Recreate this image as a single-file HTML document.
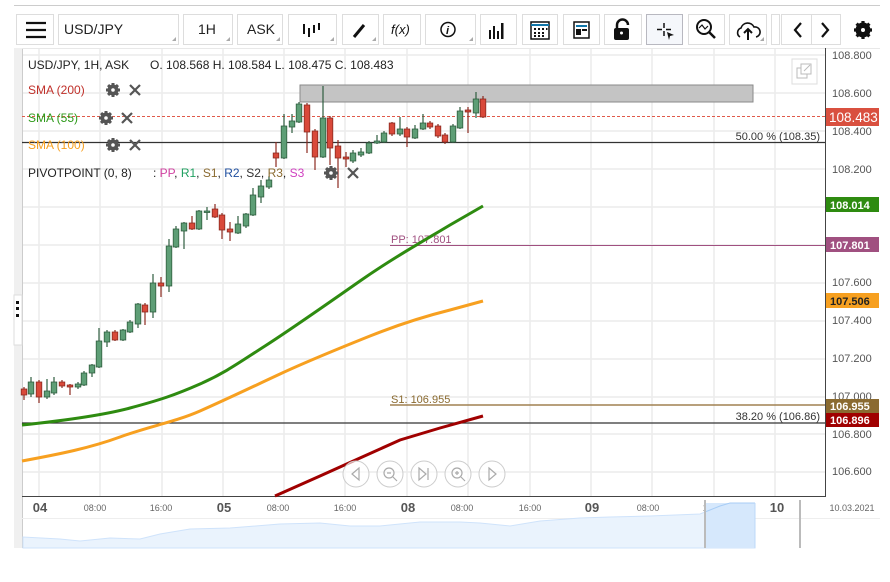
<!DOCTYPE html>
<html><head><meta charset="utf-8"><style>
body{margin:0;width:890px;height:577px;overflow:hidden;background:#fff;font-family:"Liberation Sans",sans-serif}
svg text{font-family:"Liberation Sans",sans-serif}
.pre{white-space:pre}
</style></head><body>
<svg id="s" width="890" height="577" viewBox="0 0 890 577" xmlns="http://www.w3.org/2000/svg">
<rect x="0" y="0" width="890" height="577" fill="#fff"/>
<line x1="14" y1="5.5" x2="880" y2="5.5" stroke="#ccc"/>
<g fill="#fff" stroke="#ddd">
<rect x="16.5" y="14.5" width="37" height="30"/>
<rect x="58.5" y="14.5" width="120" height="30"/>
<rect x="183.5" y="14.5" width="49" height="30"/>
<rect x="237.5" y="14.5" width="45" height="30"/>
<rect x="288.5" y="14.5" width="48" height="30"/>
<rect x="342.5" y="14.5" width="36" height="30"/>
<rect x="383.5" y="14.5" width="37" height="30"/>
<rect x="425.5" y="14.5" width="50" height="30"/>
<rect x="480.5" y="14.5" width="36" height="30"/>
<rect x="522.5" y="14.5" width="35" height="30"/>
<rect x="563.5" y="14.5" width="36" height="30"/>
<rect x="604.5" y="14.5" width="37" height="30"/>
<rect x="646.5" y="14.5" width="36" height="30" fill="#f5f7fb" stroke="#b8b8c0"/>
<rect x="688.5" y="14.5" width="36" height="30"/>
<rect x="729.5" y="14.5" width="37" height="30"/>
<rect x="771.5" y="14.5" width="8" height="30"/>
<rect x="781.5" y="14.5" width="59" height="30"/>
</g>
<line x1="811.5" y1="15" x2="811.5" y2="44" stroke="#ddd"/>
<g fill="#aaa">
<path d="M176 41 L176 37 L172 41Z"/><path d="M230 41 L230 37 L226 41Z"/><path d="M280 41 L280 37 L276 41Z"/><path d="M334 41 L334 37 L330 41Z"/><path d="M376 41 L376 37 L372 41Z"/><path d="M473 41 L473 37 L469 41Z"/><path d="M764 41 L764 37 L760 41Z"/>
</g>
<g stroke="#111" stroke-width="2.2"><line x1="26" y1="23" x2="46" y2="23"/><line x1="26" y1="30" x2="46" y2="30"/><line x1="26" y1="37" x2="46" y2="37"/></g>
<text x="64" y="34" font-size="14" fill="#222">USD/JPY</text>
<text x="198" y="34" font-size="14" fill="#222">1H</text>
<text x="247" y="34" font-size="14" fill="#222">ASK</text>
<g stroke="#111" stroke-width="2"><line x1="304" y1="24" x2="304" y2="34"/><line x1="309" y1="28" x2="309" y2="37"/><line x1="314" y1="25" x2="314" y2="33"/><line x1="319" y1="23" x2="319" y2="30"/></g>
<path d="M354 37 L364 25" stroke="#111" stroke-width="3"/>
<text x="391" y="34" font-size="13" font-style="italic" font-family="Liberation Serif" fill="#111">f(x)</text>
<circle cx="448" cy="29.5" r="7" fill="none" stroke="#111" stroke-width="1.5"/><text x="446" y="34" font-size="11" font-style="italic" font-weight="bold" font-family="Liberation Serif" fill="#111">i</text>
<g fill="#111"><rect x="489" y="30" width="2" height="9"/><rect x="493" y="26" width="2" height="13"/><rect x="497" y="31" width="2" height="8"/><rect x="501" y="23" width="2.5" height="16"/></g>
<rect x="531" y="22" width="18" height="17" fill="none" stroke="#111" stroke-width="1.5"/><line x1="531" y1="25" x2="549" y2="25" stroke="#17a" stroke-width="2"/>
<g fill="#111"><rect x="534" y="28" width="2" height="2"/><rect x="538" y="28" width="2" height="2"/><rect x="542" y="28" width="2" height="2"/><rect x="546" y="28" width="1.5" height="2"/><rect x="534" y="32" width="2" height="2"/><rect x="538" y="32" width="2" height="2"/><rect x="542" y="32" width="2" height="2"/><rect x="534" y="35" width="2" height="2"/><rect x="538" y="35" width="2" height="2"/><rect x="542" y="35" width="2" height="2"/></g>
<rect x="574" y="22" width="15" height="16" fill="none" stroke="#111" stroke-width="1.5"/><rect x="576" y="25" width="11" height="2" fill="#17a"/><rect x="576" y="29" width="5" height="6" fill="#111"/><rect x="582" y="29" width="5" height="2" fill="#111"/>
<path d="M617 28 V25 a5.5 5.5 0 0 1 11 0" fill="none" stroke="#111" stroke-width="2.5"/><rect x="614" y="28" width="15" height="12" rx="2" fill="#111"/><circle cx="621.5" cy="33" r="1.5" fill="#fff"/>
<g stroke="#111" stroke-width="1.5"><line x1="664" y1="23" x2="664" y2="28"/><line x1="664" y1="31" x2="664" y2="36"/><line x1="657" y1="29.5" x2="662" y2="29.5"/><line x1="666" y1="29.5" x2="671" y2="29.5"/></g><path d="M667 32 L674 35 L670 36 L669 40Z" fill="#111"/>
<circle cx="704" cy="27" r="7" fill="none" stroke="#111" stroke-width="2"/><line x1="709" y1="32" x2="715" y2="38" stroke="#111" stroke-width="2.5"/><path d="M699 28 L702 25 L705 29 L708 26" stroke="#111" fill="none" stroke-width="1.2"/>
<path d="M740 37 a5 5 0 0 1 1 -9 a7 7 0 0 1 13 -1 a5 5 0 0 1 2 10" fill="none" stroke="#111" stroke-width="1.6"/><path d="M748 40 V30 M744 33 L748 29 L752 33" stroke="#111" stroke-width="2" fill="none"/>
<path d="M801 23 L795 30 L801 37" stroke="#111" stroke-width="2.2" fill="none"/><path d="M822 23 L828 30 L822 37" stroke="#111" stroke-width="2.2" fill="none"/>
<g transform="translate(863,30)"><circle r="5.5" fill="none" stroke="#111" stroke-width="4"/><g stroke="#111" stroke-width="3.2"><line x1="0" y1="-9" x2="0" y2="9"/><line x1="-9" y1="0" x2="9" y2="0"/><line x1="-6.4" y1="-6.4" x2="6.4" y2="6.4"/><line x1="-6.4" y1="6.4" x2="6.4" y2="-6.4"/></g><circle r="2" fill="#fff"/></g>
<rect x="14" y="48" width="8" height="500" fill="#f0f0f0"/>
<line x1="22.5" y1="48" x2="22.5" y2="548" stroke="#ccc"/>
<rect x="14" y="295" width="8" height="50" fill="#fff" stroke="#ddd"/>
<g fill="#111"><rect x="16" y="301" width="3" height="3"/><rect x="16" y="307" width="3" height="3"/><rect x="16" y="314" width="3" height="3"/></g>
<line x1="22" y1="48.5" x2="880" y2="48.5" stroke="#e8e8e8"/>
<g id="grid" stroke="#ececec" stroke-width="1.5"></g>
<line x1="825.5" y1="48" x2="825.5" y2="497" stroke="#444"/>
<line x1="22" y1="496.5" x2="826" y2="496.5" stroke="#444"/>
<rect x="792" y="59" width="25" height="25" fill="#fff" stroke="#ddd"/>
<rect x="797" y="68" width="10" height="10" fill="none" stroke="#bbb"/><rect x="801" y="64" width="10" height="10" fill="#fff" stroke="#bbb"/><path d="M804 71 L810 65" stroke="#bbb"/>
<rect x="300" y="85" width="453" height="17" fill="#c4c4c4" stroke="#8a8a8a"/>
<line x1="22" y1="116.5" x2="825" y2="116.5" stroke="#e05a4a" stroke-dasharray="3,2"/>
<line x1="22" y1="142.5" x2="825" y2="142.5" stroke="#333" stroke-width="1.2"/>
<text x="820" y="140" font-size="11" fill="#333" text-anchor="end">50.00 % (108.35)</text>
<line x1="390" y1="245.5" x2="825" y2="245.5" stroke="#a05080"/>
<text x="391" y="243" font-size="11" fill="#a05080">PP: 107.801</text>
<line x1="390" y1="405" x2="825" y2="405" stroke="#a08050" stroke-width="1.5"/>
<text x="391" y="403" font-size="11" fill="#8a6a30">S1: 106.955</text>
<line x1="22" y1="423" x2="825" y2="423" stroke="#333" stroke-width="1.2"/>
<text x="820" y="420" font-size="11" fill="#333" text-anchor="end">38.20 % (106.86)</text>
<path fill="none" stroke="#2e8b10" stroke-width="3" d="M22 425 C60 421 100 416 130 408 S175 395 200 384 S240 362 265 346 S330 302 360 281 S420 243 450 225 L483 206"/>
<path fill="none" stroke="#f7a020" stroke-width="3" d="M22 461 C60 454 90 448 120 437 S175 422 200 411 S250 388 280 374 S340 348 370 336 S430 315 450 310 L483 301"/>
<polyline fill="none" stroke="#a00000" stroke-width="3" points="275,496 320,476 360,458 400,440 440,428 483,416"/>
<g id="candles"></g>
<g fill="rgba(255,255,255,0.6)" stroke="#ccc">
<circle cx="356" cy="474" r="13"/><circle cx="390" cy="474" r="13"/><circle cx="424" cy="474" r="13"/><circle cx="458" cy="474" r="13"/><circle cx="492" cy="474" r="13"/></g>
<g fill="none" stroke="#aaa" stroke-width="1.2">
<path d="M359 468 L352 474 L359 480Z"/><circle cx="389" cy="473" r="5"/><path d="M387 473h4 M393 477 l4 4"/>
<path d="M419 468 L426 474 L419 480Z M428 468 V480"/><circle cx="457" cy="473" r="5"/><path d="M455 473h4 M457 471v4 M461 477 l4 4"/><path d="M489 468 L496 474 L489 480Z"/></g>
<text x="28" y="69" font-size="12" fill="#222">USD/JPY, 1H, ASK</text>
<text x="150" y="69" font-size="12" fill="#222">O. 108.568 H. 108.584 L. 108.475 C. 108.483</text>
<text x="28" y="94" font-size="12" fill="#c0302a">SMA (200)</text>
<text x="28" y="122" font-size="12" fill="#2e9a1a">SMA (55)</text>
<text x="28" y="149" font-size="12" fill="#f7a020">SMA (100)</text>
<text x="28" y="177" font-size="12" fill="#222">PIVOTPOINT (0, 8)</text>
<text x="153" y="177" font-size="12" fill="#222">: <tspan fill="#d040a0">PP</tspan>, <tspan fill="#20a060">R1</tspan>, <tspan fill="#8a6a30">S1</tspan>, <tspan fill="#2050a0">R2</tspan>, <tspan fill="#333">S2</tspan>, <tspan fill="#8a6a30">R3</tspan>, <tspan fill="#d040c0">S3</tspan></text>
<g id="icons"></g>
<g font-size="11" fill="#555">
<text x="832" y="59">108.800</text><text x="832" y="97">108.600</text><text x="832" y="135">108.400</text><text x="832" y="173">108.200</text><text x="832" y="286">107.600</text><text x="832" y="324">107.400</text><text x="832" y="362">107.200</text><text x="832" y="400">107.000</text><text x="832" y="438">106.800</text><text x="832" y="475">106.600</text></g>
<g font-size="12" fill="#fff">
<rect x="826" y="108" width="53" height="18" fill="#d9503f"/><text x="829" y="122" font-size="13.5">108.483</text>
<rect x="826" y="197" width="53" height="15" fill="#2e8b10"/><text x="830" y="209" font-size="11" font-weight="bold">108.014</text>
<rect x="826" y="237" width="53" height="15" fill="#a05080"/><text x="830" y="249" font-size="11" font-weight="bold">107.801</text>
<rect x="826" y="293" width="53" height="15" fill="#f7a020"/><text x="830" y="305" font-size="11" font-weight="bold" fill="#222">107.506</text>
<rect x="826" y="399" width="53" height="14" fill="#8a6a30"/><text x="830" y="410" font-size="11" font-weight="bold">106.955</text>
<rect x="826" y="413" width="53" height="14" fill="#a00000"/><text x="830" y="424" font-size="11" font-weight="bold">106.896</text></g>
<g font-size="9" fill="#666">
<text x="40" y="512" font-size="13" font-weight="bold" fill="#555" text-anchor="middle">04</text>
<text x="95" y="511" text-anchor="middle">08:00</text><text x="161" y="511" text-anchor="middle">16:00</text>
<text x="224" y="512" font-size="13" font-weight="bold" fill="#555" text-anchor="middle">05</text>
<text x="278" y="511" text-anchor="middle">08:00</text><text x="345" y="511" text-anchor="middle">16:00</text>
<text x="408" y="512" font-size="13" font-weight="bold" fill="#555" text-anchor="middle">08</text>
<text x="462" y="511" text-anchor="middle">08:00</text><text x="530" y="511" text-anchor="middle">16:00</text>
<text x="592" y="512" font-size="13" font-weight="bold" fill="#555" text-anchor="middle">09</text>
<text x="648" y="511" text-anchor="middle">08:00</text><text x="714" y="511" text-anchor="middle">16:00</text>
<text x="777" y="512" font-size="13" font-weight="bold" fill="#555" text-anchor="middle">10</text>
<text x="852" y="511" text-anchor="middle">10.03.2021</text></g>
<line x1="22" y1="518.5" x2="880" y2="518.5" stroke="#eee"/>
<path d="M23 548 V537 L60 539 L80 541 L110 538 L140 539 L160 534 L190 529 L230 528 L280 524 L320 523 L350 526 L380 526 L420 522 L460 522 L480 523 L510 526 L540 521 L580 518 L610 517 L650 516 L700 514 L705 512 L720 507 L730 504 L755 504 L755 548Z" fill="#eaf3fd" stroke="#cfe3fb"/>
<rect x="705" y="503" width="50" height="45" fill="#d6e8fc"/>
<path d="M705 512 L720 506 L730 503 L755 503" fill="none" stroke="#a8cdf6"/>
<line x1="705" y1="500" x2="705" y2="548" stroke="#bbb" stroke-width="2"/>
<line x1="800" y1="500" x2="800" y2="548" stroke="#bbb" stroke-width="2"/>
<line x1="755" y1="503" x2="755" y2="548" stroke="#bcd8f8"/>
</svg>
<script>
var NS="http://www.w3.org/2000/svg";
function el(p,t,a){var e=document.createElementNS(NS,t);for(var k in a)e.setAttribute(k,a[k]);p.appendChild(e);return e;}
var g=document.getElementById('grid');
[39,100,162,223,284,345,407,468,530,591,652,714,775].forEach(function(x){el(g,'line',{x1:x,y1:49,x2:x,y2:496});});
[55,93,131,169,207,245,283,321,359,397,434,472].forEach(function(y){el(g,'line',{x1:23,y1:y,x2:825,y2:y});});
var C=[[24,389,395,387,400,0],[31,382,394,377,397,1],[39,382,397,380,403,0],[47,391,397,379,399,1],[54,382,393,377,395,1],[62,382,386,380,388,0],[70,385,387,384,395,0],[78,384,387,382,389,1],[84,373,385,371,386,1],[92,365,373,364,377,1],[99,341,367,328,368,1],[107,332,342,330,347,1],[115,332,340,330,341,0],[123,330,340,329,341,1],[130,322,332,320,333,1],[138,304,324,303,328,1],[145,305,312,303,325,0],[153,283,312,274,318,1],[161,283,286,277,297,0],[169,246,286,239,292,1],[176,229,247,226,248,1],[184,223,231,222,249,1],[192,223,229,216,230,0],[199,211,229,210,230,1],[207,211,212,207,220,1],[215,209,217,204,218,0],[222,215,230,213,239,0],[230,229,232,222,241,0],[238,224,233,216,234,1],[246,214,226,213,228,1],[253,195,215,188,216,1],[261,186,197,180,203,1],[269,180,187,176,189,1],[276,153,158,142,167,0],[284,126,158,114,159,1],[292,121,127,114,133,1],[299,104,122,102,123,1],[307,105,132,103,153,0],[315,131,157,129,170,0],[323,118,157,86,158,1],[330,118,148,116,165,0],[338,146,158,140,188,0],[346,157,159,152,167,0],[353,153,161,150,163,1],[361,152,155,148,157,1],[369,143,153,141,154,1],[377,141,143,135,144,1],[384,133,142,131,143,1],[392,123,134,122,136,0],[400,129,134,117,136,1],[407,129,137,127,147,0],[415,129,138,125,139,1],[423,123,129,114,130,1],[430,123,127,121,129,0],[438,126,136,124,138,0],[445,135,142,133,144,0],[453,126,142,124,143,1],[460,111,128,107,129,1],[468,110,112,107,133,0],[476,99,113,92,118,1],[483,99,117,96,118,0]];
var cg=document.getElementById('candles');
C.forEach(function(c){var gr=c[5];var st=gr?'#2f5e3f':'#8b2a20';var fi=gr?'#5e9e76':'#d9493a';
el(cg,'line',{x1:c[0],y1:c[3],x2:c[0],y2:c[4],stroke:st,'stroke-width':1.2});
el(cg,'rect',{x:c[0]-2.8,y:c[1],width:5.6,height:Math.max(1.5,c[2]-c[1]),fill:fi,stroke:st,'stroke-width':0.8});});
var ig=document.getElementById('icons');
function gear(x,y){var t=el(ig,'g',{transform:'translate('+x+','+y+')'});el(t,'circle',{r:4,fill:'none',stroke:'#555','stroke-width':3});
[0,45,90,135].forEach(function(a){el(t,'rect',{x:-1.5,y:-7,width:3,height:14,fill:'#555',transform:'rotate('+a+')'});});el(t,'circle',{r:1.8,fill:'#fff'});}
function cross(x,y){el(ig,'path',{d:'M'+(x-5)+' '+(y-5)+' L'+(x+5)+' '+(y+5)+' M'+(x+5)+' '+(y-5)+' L'+(x-5)+' '+(y+5),stroke:'#555','stroke-width':2.2});}
gear(113,90);cross(135,90);gear(106,118);cross(127,118);gear(113,145);cross(135,145);gear(331,173);cross(353,173);
</script>
</body></html>
